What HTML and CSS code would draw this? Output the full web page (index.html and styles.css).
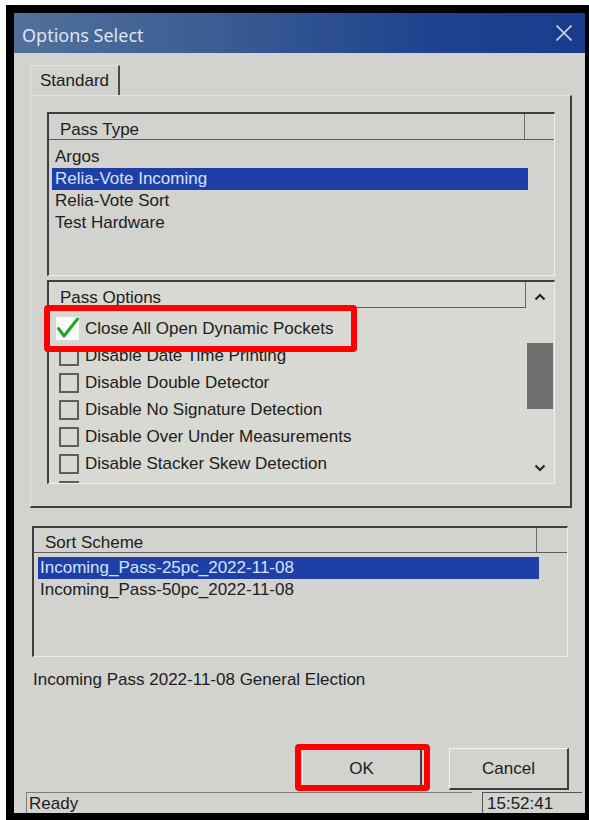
FILE: index.html
```html
<!DOCTYPE html>
<html lang="en">
<head>
<meta charset="utf-8">
<title>Options Select</title>
<link rel="stylesheet" href="styles.css">
</head>
<body>
<div class="frame">
  <div class="dialog">
    <div class="titlebar">
      <span class="title">Options Select</span>
      <svg class="close" width="18" height="18" viewBox="0 0 18 18" aria-hidden="true">
        <path d="M1.5 1.5 L16.5 16.5 M16.5 1.5 L1.5 16.5" stroke="#d3dbe8" stroke-width="1.7" fill="none"/>
      </svg>
    </div>

    <div class="client">
      <div class="tabs">
        <div class="tab">Standard</div>
      </div>

      <div class="tabpanel">
        <div class="listbox passtype">
          <div class="lv-header">
            <div class="lv-col">Pass Type</div>
            <div class="lv-fill"></div>
          </div>
          <ul class="rows">
            <li class="row">Argos</li>
            <li class="row selected">Relia-Vote Incoming</li>
            <li class="row">Relia-Vote Sort</li>
            <li class="row">Test Hardware</li>
          </ul>
        </div>

        <div class="listbox passoptions">
          <div class="lv-main">
            <div class="lv-header">
              <div class="lv-col">Pass Options</div>
            </div>
            <ul class="checks">
              <li class="check-row"><span class="box checked"><svg width="24" height="22" viewBox="0 0 24 22" aria-hidden="true"><path d="M2.5 11.5 L8 19 L21.5 2" stroke="#27a32a" stroke-width="3" fill="none" stroke-linecap="round" stroke-linejoin="round"/></svg></span>Close All Open Dynamic Pockets</li>
              <li class="check-row"><span class="box"></span>Disable Date Time Printing</li>
              <li class="check-row"><span class="box"></span>Disable Double Detector</li>
              <li class="check-row"><span class="box"></span>Disable No Signature Detection</li>
              <li class="check-row"><span class="box"></span>Disable Over Under Measurements</li>
              <li class="check-row"><span class="box"></span>Disable Stacker Skew Detection</li>
              <li class="check-row"><span class="box"></span>Disable Pitch Lockout</li>
            </ul>
          </div>
          <div class="vscroll">
            <div class="arrow">
              <svg width="12" height="8" viewBox="0 0 12 8" aria-hidden="true"><path d="M1.5 6.5 L6 2 L10.5 6.5" stroke="#262626" stroke-width="2.2" fill="none"/></svg>
            </div>
            <div class="track"><div class="thumb"></div></div>
            <div class="arrow">
              <svg width="12" height="8" viewBox="0 0 12 8" aria-hidden="true"><path d="M1.5 1.5 L6 6 L10.5 1.5" stroke="#262626" stroke-width="2.2" fill="none"/></svg>
            </div>
          </div>
          <div class="callout callout-option"></div>
        </div>
      </div>

      <div class="listbox sortscheme">
        <div class="lv-header">
          <div class="lv-col">Sort Scheme</div>
          <div class="lv-fill"></div>
        </div>
        <ul class="rows">
          <li class="row selected">Incoming_Pass-25pc_2022-11-08</li>
          <li class="row">Incoming_Pass-50pc_2022-11-08</li>
        </ul>
      </div>

      <p class="desc">Incoming Pass 2022-11-08 General Election</p>

      <div class="buttons">
        <button class="btn ok" type="button">OK<span class="callout callout-ok"></span></button>
        <button class="btn" type="button">Cancel</button>
      </div>
    </div>

    <div class="statusbar">
      <span class="pane pane-main">Ready</span>
      <span class="pane pane-clock">15:52:41</span>
    </div>
  </div>
</div>
</body>
</html>
```

FILE: styles.css
```css
* {
  box-sizing: border-box;
}

html, body {
  margin: 0;
  padding: 0;
  background: #ffffff;
}

body {
  font-family: "Liberation Sans", Arial, sans-serif;
  font-size: 17px;
  color: #202020;
}

/* black bezel around the window */
.frame {
  margin: 5px 0 0 6px;
  width: 583px;
  height: 815px;
  background: #000;
  padding: 8px 4px 7px 8px;
}

.dialog {
  width: 571px;
  height: 800px;
  background: #d2d2cf;
  display: flex;
  flex-direction: column;
}

/* title bar */
.titlebar {
  height: 40px;
  flex: none;
  display: flex;
  align-items: flex-start;
  justify-content: space-between;
  padding: 4px 12px 0 8px;
  background: linear-gradient(90deg, #52709a 0%, #3a5d93 35%, #1f418f 75%, #1b3c8c 100%);
}

.title {
  font-family: "Noto Sans", "Open Sans", sans-serif;
  font-size: 18px;
  line-height: 36px;
  color: #dfe5ee;
}

.close {
  margin-top: 7px;
}

/* client area */
.client {
  flex: 1;
  padding: 12px 13px 0 16px;
  display: flex;
  flex-direction: column;
}

.tabs {
  display: flex;
}

.tab {
  width: 90px;
  height: 30px;
  line-height: 30px;
  padding-left: 9px;
  border-top: 1px solid #e2e2e0;
  border-left: 1px solid #e2e2e0;
  border-right: 2px solid #4a4a4a;
}

.tabpanel {
  height: 413px;
  border-top: 1px solid #e2e2e0;
  border-left: 1px solid #e2e2e0;
  border-right: 2px solid #3d3d3d;
  border-bottom: 2px solid #3d3d3d;
  padding: 16px 15px 0 16px;
}

/* list views */
.listbox {
  position: relative;
  border-top: 2px solid #3f3f3f;
  border-left: 2px solid #3f3f3f;
  border-right: 1px solid #eeeeec;
  border-bottom: 1px solid #eeeeec;
}

.lv-header {
  display: flex;
  border-bottom: 1px solid #5c5c5c;
}

.lv-col {
  padding: 6px 0 0 11px;
  line-height: 19px;
  border-right: 1px solid #6a6a6a;
}

.lv-fill {
  flex: 1;
}

.rows {
  list-style: none;
  margin: 0;
  padding: 6px 0 0 3px;
}

.row {
  height: 22px;
  line-height: 22px;
  padding-left: 3px;
  white-space: nowrap;
}

.row.selected {
  background: #1e40a6;
  color: #d6e2ff;
}

.passtype {
  height: 164px;
}

.passtype .lv-col {
  width: 476px;
}

.passtype .row {
  width: 476px;
}

/* pass options with checkboxes and scrollbar */
.passoptions {
  margin-top: 4px;
  height: 204px;
  display: flex;
  background: #d7d9d2;
}

.lv-main {
  flex: 1;
  overflow: hidden;
}

.passoptions .lv-header {
  border-bottom: none;
}

.passoptions .lv-col {
  flex: 1;
  border-bottom: 1px solid #5c5c5c;
}

.checks {
  list-style: none;
  margin: 0;
  padding: 7px 0 0 10px;
}

.check-row {
  height: 27px;
  display: flex;
  align-items: center;
  white-space: nowrap;
}

.box {
  width: 20px;
  height: 20px;
  border: 2px solid #5e5e5e;
  margin-right: 6px;
  flex: none;
}

.box.checked {
  width: 23px;
  height: 23px;
  margin-left: -3px;
  border: none;
  background: #fbfbfb;
  position: relative;
}

.box.checked svg {
  position: absolute;
  left: 0;
  top: 0;
}

.vscroll {
  width: 28px;
  flex: none;
  display: flex;
  flex-direction: column;
}

.arrow {
  height: 30px;
  display: flex;
  align-items: center;
  justify-content: center;
}

.track {
  flex: 1;
  padding: 31px 0 0 1px;
}

.thumb {
  width: 26px;
  height: 66px;
  background: #6f6f6f;
}

/* red callouts */
.callout {
  position: absolute;
  border: 6px solid #ff0000;
  border-radius: 4px;
  pointer-events: none;
}

.callout-option {
  left: -5px;
  top: 23px;
  width: 313px;
  height: 47px;
}

/* sort scheme */
.sortscheme {
  margin: 18px 4px 0 2px;
  height: 131px;
}

.sortscheme .lv-col {
  width: 503px;
  padding-top: 5px;
}

.sortscheme .rows {
  padding: 4px 0 0 4px;
}

.sortscheme .row {
  width: 501px;
  padding-left: 2px;
}

.desc {
  margin: 12px 0 0 3px;
  line-height: 22px;
}

/* dialog buttons */
.buttons {
  margin-top: 57px;
  display: flex;
  justify-content: flex-end;
  gap: 27px;
  padding-right: 3px;
}

.btn {
  position: relative;
  width: 120px;
  height: 42px;
  font: inherit;
  color: inherit;
  background: #d2d2cf;
  border-top: 1px solid #f4f4f2;
  border-left: 1px solid #f4f4f2;
  border-right: 2px solid #3e3e3e;
  border-bottom: 2px solid #3e3e3e;
  padding: 0;
}

.callout-ok {
  left: -8px;
  top: -5px;
  width: 135px;
  height: 47px;
}

/* status bar */
.statusbar {
  height: 21px;
  flex: none;
  display: flex;
  padding: 0 3px 0 12px;
}

.pane {
  line-height: 20px;
  padding-top: 1px;
  border-top: 1px solid #7e7e7e;
  border-left: 1px solid #7e7e7e;
}

.pane-main {
  flex: 1;
  padding-left: 2px;
}

.pane-clock {
  width: 100px;
  margin-left: 10px;
  padding-left: 4px;
  border-top-color: #555;
  border-left-color: #555;
}
```
